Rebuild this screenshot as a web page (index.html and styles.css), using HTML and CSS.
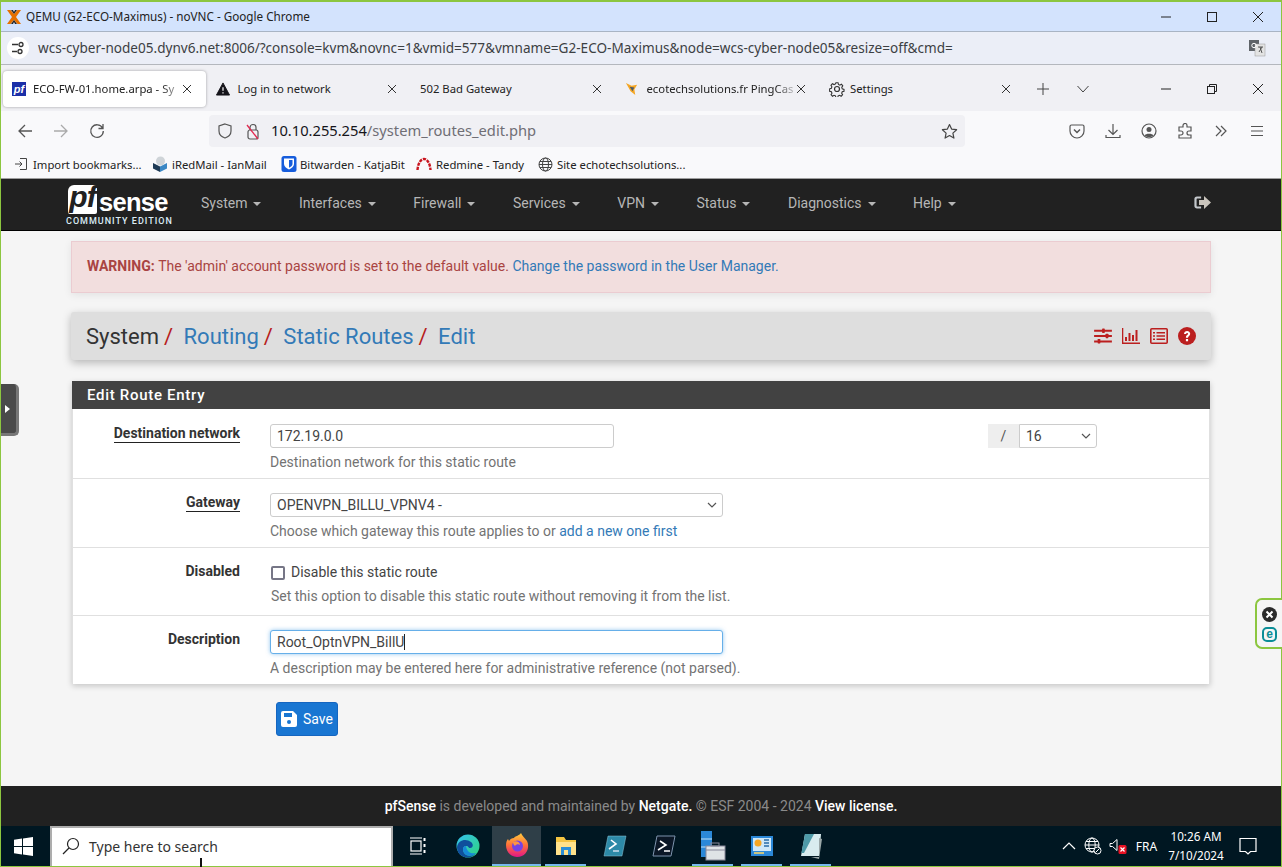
FILE: index.html
```html
<!DOCTYPE html>
<html lang="en">
<head>
    <meta charset="UTF-8">
    <title>ECO-FW-01.home.arpa - System: Routing: Static Routes: Edit</title>
    <link rel="stylesheet" href="styles.css">
</head>
<body>
<div class="screen">
    <div class="titlebar">
        <svg class="app-icon" width="16" height="16" viewBox="0 0 16 16"><path d="M1 1h3.500L8 5 11.500 1H15L10 8l5 7h-3.500L8 11l-3.500 4H1l5-7z" fill="#e57000"/><path d="M5 1h2l1 2 1-2h2L8 5zM5 15h2l1-2 1 2h2L8 11z" fill="#222"/></svg>
        <span class="title-text">QEMU (G2-ECO-Maximus) - noVNC - Google Chrome</span>
        <div class="winbtns">
            <span class="winbtn"><svg width="12" height="12" viewBox="0 0 12 12"><path d="M1 6h10" stroke="#222" stroke-width="1"/></svg></span>
            <span class="winbtn"><svg width="12" height="12" viewBox="0 0 12 12"><rect x="1.500" y="1.500" width="9" height="9" fill="none" stroke="#222"/></svg></span>
            <span class="winbtn"><svg width="12" height="12" viewBox="0 0 12 12"><path d="M1 1l10 10M11 1L1 11" stroke="#222"/></svg></span>
        </div>
    </div>

    <div class="addressbar">
        <span class="site-btn"><svg width="14" height="14" viewBox="0 0 14 14" fill="none" stroke="#333" stroke-width="1.300"><path d="M1 3.500h6M1 10.500h5"/><circle cx="10" cy="3.500" r="2"/><circle cx="9" cy="10.500" r="2"/></svg></span>
        <span class="address-text">wcs-cyber-node05.dynv6.net:8006/?console=kvm&amp;novnc=1&amp;vmid=577&amp;vmname=G2-ECO-Maximus&amp;node=wcs-cyber-node05&amp;resize=off&amp;cmd=</span>
        <svg class="translate" width="18" height="18" viewBox="0 0 18 18"><rect x="1" y="1" width="10" height="11" fill="#5f6368"/><rect x="7" y="5" width="10" height="12" fill="#e3e3e3" stroke="#999" stroke-width=".5"/><circle cx="6" cy="6.500" r="2.200" fill="none" stroke="#fff"/><path d="M10 8h5M12 8l2 6M14 8l-3 5" stroke="#555" fill="none"/></svg>
    </div>

    <div class="ff-tabs">
        <div class="tab tab-active">
            <span class="pf-favicon">pf</span>
            <span class="tab-label tab-fade">ECO-FW-01.home.arpa - Sy</span>
            <svg class="tab-close" width="10" height="10" viewBox="0 0 10 10"><path d="M1 1l8 8M9 1L1 9" stroke="#333"/></svg>
        </div>
        <div class="tab">
            <svg class="tab-icon" width="14" height="14" viewBox="0 0 15 15"><path d="M7.500 1L14.500 14H.500z" fill="#15141a" stroke="#15141a" stroke-linejoin="round"/><path d="M7.500 5.500v4M7.500 11v1.200" stroke="#fff" stroke-width="1.300"/></svg>
            <span class="tab-label">Log in to network</span>
            <svg class="tab-close" width="10" height="10" viewBox="0 0 10 10"><path d="M1 1l8 8M9 1L1 9" stroke="#333"/></svg>
        </div>
        <div class="tab">
            <span class="tab-label">502 Bad Gateway</span>
            <svg class="tab-close" width="10" height="10" viewBox="0 0 10 10"><path d="M1 1l8 8M9 1L1 9" stroke="#333"/></svg>
        </div>
        <div class="tab">
            <svg class="tab-icon" width="14" height="14" viewBox="0 0 15 15"><path d="M1 1l6 3 6-1-3 5 1 6-5-4z" fill="#f5a623"/><path d="M5 5l5 1-2 4z" fill="#4a5a6a"/></svg>
            <span class="tab-label tab-fade">ecotechsolutions.fr PingCas</span>
            <svg class="tab-close" width="10" height="10" viewBox="0 0 10 10"><path d="M1 1l8 8M9 1L1 9" stroke="#333"/></svg>
        </div>
        <div class="tab">
            <svg class="tab-icon tab-icon-gear" width="16" height="16" viewBox="0 0 16 16" fill="none" stroke="#333" stroke-width="1.200"><circle cx="8" cy="8" r="2.500"/><path d="M6.800 1h2.400l.4 2 1.500.7 1.800-1 1.500 1.800-1.100 1.700.5 1.600 2 .6v2.200l-2 .5-.6 1.600 1 1.700-1.600 1.600-1.700-1-1.600.6-.5 2H6.800l-.5-2-1.600-.6-1.700 1-1.600-1.600 1-1.700-.6-1.600-2-.5V7.800l2-.6.5-1.600-1-1.700L2.900 2.100l1.800 1 1.600-.7z" transform="translate(.8 .8) scale(.9)"/></svg>
            <span class="tab-label">Settings</span>
            <svg class="tab-close" width="10" height="10" viewBox="0 0 10 10"><path d="M1 1l8 8M9 1L1 9" stroke="#333"/></svg>
        </div>
        <span class="tab-tool"><svg width="12" height="12" viewBox="0 0 12 12"><path d="M6 0v12M0 6h12" stroke="#444"/></svg></span>
        <span class="tab-tool tab-list"><svg width="12" height="8" viewBox="0 0 12 8"><path d="M.500 1L6 7l5.500-6" fill="none" stroke="#444"/></svg></span>
        <div class="winbtns">
            <span class="winbtn"><svg width="12" height="12" viewBox="0 0 12 12"><path d="M1 6h10" stroke="#222"/></svg></span>
            <span class="winbtn"><svg width="12" height="12" viewBox="0 0 12 12"><rect x="1.500" y="3.500" width="7" height="7" fill="none" stroke="#222"/><path d="M3.500 3.500v-2h7v7h-2" fill="none" stroke="#222"/></svg></span>
            <span class="winbtn"><svg width="12" height="12" viewBox="0 0 12 12"><path d="M1 1l10 10M11 1L1 11" stroke="#222"/></svg></span>
        </div>
    </div>

    <div class="ff-nav">
        <span class="nav-btn"><svg width="16" height="16" viewBox="0 0 16 16"><path d="M15 8H2M8 2L2 8l6 6" fill="none" stroke="#555" stroke-width="1.300"/></svg></span>
        <span class="nav-btn"><svg width="16" height="16" viewBox="0 0 16 16"><path d="M1 8h13M8 2l6 6-6 6" fill="none" stroke="#aaa" stroke-width="1.300"/></svg></span>
        <span class="nav-btn"><svg width="16" height="16" viewBox="0 0 16 16"><path d="M13.500 5A6.300 6.300 0 1 0 14.300 8M14 1v4.500H9.500" fill="none" stroke="#555" stroke-width="1.300"/></svg></span>
        <div class="urlbar">
            <svg class="url-shield" width="16" height="16" viewBox="0 0 16 16"><path d="M8 1l6 2v5c0 3.500-3 6-6 7-3-1-6-3.500-6-7V3z" fill="none" stroke="#555" stroke-width="1.200"/></svg>
            <svg class="url-lock" width="16" height="17" viewBox="0 0 16 17"><rect x="3" y="7" width="10" height="9" rx="2" fill="none" stroke="#555" stroke-width="1.200"/><path d="M5 7V4.500a3 3 0 0 1 6 0V7" fill="none" stroke="#555" stroke-width="1.200"/><path d="M2 2l11 14" stroke="#e22850" stroke-width="1.300"/></svg>
            <span class="url-text">10.10.255.254<span class="url-path">/system_routes_edit.php</span></span>
            <svg class="url-star" width="17" height="17" viewBox="0 0 17 17"><path d="M8.500 1.500l2.100 4.600 5 .6-3.700 3.400 1 5-4.400-2.500-4.400 2.500 1-5L1.400 6.700l5-.6z" fill="none" stroke="#444" stroke-width="1.200" stroke-linejoin="round"/></svg>
        </div>
        <div class="nav-right">
            <span class="nav-btn"><svg width="16" height="16" viewBox="0 0 16 16" fill="none" stroke="#555" stroke-width="1.200"><path d="M2.500 2h11A1.500 1.500 0 0 1 15 3.500V8a7 7 0 0 1-14 0V3.500A1.500 1.500 0 0 1 2.500 2z"/><path d="M5 6.500l3 3 3-3" stroke-width="1.500"/></svg></span>
            <span class="nav-btn"><svg width="16" height="16" viewBox="0 0 16 16" fill="none" stroke="#555" stroke-width="1.200"><path d="M8 1v10M3.500 7L8 11.500 12.500 7M1 12v2.500h14V12"/></svg></span>
            <span class="nav-btn"><svg width="16" height="16" viewBox="0 0 16 16"><circle cx="8" cy="8" r="7" fill="none" stroke="#555" stroke-width="1.200"/><circle cx="8" cy="6.500" r="2.500" fill="#555"/><path d="M3.500 12.500c1-2.500 8-2.500 9 0A7 7 0 0 1 3.500 12.500z" fill="#555"/></svg></span>
            <span class="nav-btn"><svg width="16" height="16" viewBox="0 0 16 16"><path d="M6 2.500a2 2 0 0 1 4 0V4h4v4h-2a2 2 0 0 0 0 4h2v3H2v-3h2a1.800 1.800 0 0 0 0-4H2V4h4z" fill="none" stroke="#555" stroke-width="1.200"/></svg></span>
            <span class="nav-btn"><svg width="14" height="14" viewBox="0 0 14 14"><path d="M2 2l5 5-5 5M7 2l5 5-5 5" fill="none" stroke="#555" stroke-width="1.200"/></svg></span>
            <span class="nav-btn"><svg width="14" height="12" viewBox="0 0 14 12"><path d="M1 1.500h12M1 6h12M1 10.500h12" stroke="#555" stroke-width="1.200"/></svg></span>
        </div>
    </div>

    <div class="bookmarks">
        <div class="bm bm-import">
            <svg width="14" height="14" viewBox="0 0 14 14" fill="none" stroke="#444"><path d="M6 1.500h6.500v11H6M1 7h7M5.500 4.500L8 7l-2.500 2.500"/></svg>
            <span>Import bookmarks...</span>
        </div>
        <div class="bm bm-iredmail">
            <svg width="16" height="16" viewBox="0 0 16 16"><path d="M1 7l7 3.500V16L1 12.500z" fill="#1d3a55"/><path d="M15 7l-7 3.500V16l7-3.500z" fill="#3b87c4"/><circle cx="8.500" cy="5" r="4.500" fill="#cfd4d8"/></svg>
            <span>iRedMail - IanMail</span>
        </div>
        <div class="bm bm-bitwarden">
            <svg width="16" height="16" viewBox="0 0 16 16"><rect x="0.500" y="0" width="15" height="16" rx="2.500" fill="#175ddc"/><path d="M3 2.500h10V8c0 2.500-2.500 4.500-5 5.500C5.500 12.500 3 10.500 3 8z" fill="#fff"/><path d="M8 4h3.500v4c0 1.800-1.800 3-3.500 3.800z" fill="#175ddc"/></svg>
            <span>Bitwarden - KatjaBit</span>
        </div>
        <div class="bm bm-redmine">
            <svg width="16" height="14" viewBox="0 0 16 14" fill="none" stroke="#c9141e" stroke-width="2.400" stroke-dasharray="3.200 1"><path d="M1.500 13C2 6 5 2 8 2s6 4 6.500 11"/></svg>
            <span>Redmine - Tandy</span>
        </div>
        <div class="bm bm-site">
            <svg width="15" height="15" viewBox="0 0 15 15" fill="none" stroke="#444"><circle cx="7.500" cy="7.500" r="6.500"/><ellipse cx="7.500" cy="7.500" rx="3" ry="6.500"/><path d="M1 7.500h13M2 4.500h11M2 10.500h11"/></svg>
            <span>Site echotechsolutions...</span>
        </div>
    </div>

    <nav class="pf-nav">
        <div class="pf-logo">
            <div class="pf-mark"><span class="pf-box">pf</span><span class="pf-sense">sense</span></div>
            <div class="pf-edition">COMMUNITY EDITION</div>
        </div>
        <ul class="pf-menu">
            <li>System<b class="caret"></b></li>
            <li>Interfaces<b class="caret"></b></li>
            <li>Firewall<b class="caret"></b></li>
            <li>Services<b class="caret"></b></li>
            <li>VPN<b class="caret"></b></li>
            <li>Status<b class="caret"></b></li>
            <li>Diagnostics<b class="caret"></b></li>
            <li>Help<b class="caret"></b></li>
        </ul>
        <svg class="pf-logout" width="18" height="15" viewBox="0 0 18 15"><path d="M7 3.500v-1h-3a1.500 1.500 0 0 0-1.500 1.500v7a1.500 1.500 0 0 0 1.500 1.500h3v-1" fill="none" stroke="#c4c8cc" stroke-width="2.200"/><path d="M6 5h5V1l7 6.500L11 14v-4H6z" fill="#c9c4bc"/></svg>
    </nav>

    <main class="pf-main">
        <div class="alert">
            <b>WARNING:</b> The 'admin' account password is set to the default value. <a href="#">Change the password in the User Manager.</a>
        </div>

        <div class="crumbs">
            <h1 class="crumb-text">
                <span>System</span><i>/</i>
                <a href="#">Routing</a><i>/</i>
                <a href="#">Static Routes</a><i>/</i>
                <a href="#">Edit</a>
            </h1>
            <div class="crumb-icons">
                <svg width="18" height="16" viewBox="0 0 20 18" fill="#bb1f1f"><path d="M0 2h20v2.200H0zM0 8h20v2.200H0zM0 14h20v2.200H0z"/><rect x="9" y="0.500" width="3" height="5" rx=".5"/><rect x="13" y="6.500" width="3" height="5" rx=".5"/><rect x="4" y="12.500" width="3" height="5" rx=".5"/></svg>
                <svg width="18" height="16" viewBox="0 0 18 16" fill="#bb1f1f"><path d="M0 0h1.300v14.500H18V16H0z"/><path d="M3 9h2v4H3zM6.500 5h2v8h-2zM10 7h2v6h-2zM13.500 2h2v11h-2z"/></svg>
                <svg width="18" height="16" viewBox="0 0 18 16"><rect x=".8" y=".8" width="16.400" height="14.400" rx="1" fill="none" stroke="#bb1f1f" stroke-width="1.600"/><path d="M3 4h2v1.600H3zM6.500 4h8.500v1.600H6.500zM3 7.200h2v1.600H3zM6.500 7.200h8.500v1.600H6.500zM3 10.400h2V12H3zM6.500 10.400h8.500V12H6.500z" fill="#bb1f1f"/></svg>
                <svg width="18" height="18" viewBox="0 0 18 18"><circle cx="9" cy="9" r="9" fill="#bb1f1f"/><path d="M6 7c0-4.200 6.200-4 6.200-.2 0 2.300-2.200 2.300-2.200 4H7.900c0-2.800 2.200-2.800 2.200-4 0-1.100-1.900-1.100-2 .2zM7.900 12h2.200v2.200H7.900z" fill="#fff"/></svg>
            </div>
        </div>

        <section class="panel">
            <h2 class="panel-heading">Edit Route Entry</h2>
            <div class="form-row form-row-first">
                <label class="form-label"><span class="element-required">Destination network</span></label>
                <div class="form-field">
                    <div class="form-control field-ip">172.19.0.0</div>
                    <div class="form-help">Destination network for this static route</div>
                </div>
                <div class="mask-group">
                    <span class="mask-slash">/</span>
                    <div class="form-control select-box mask-select">16
                        <svg width="10" height="6" viewBox="0 0 10 6"><path d="M1 1l4 4 4-4" fill="none" stroke="#555" stroke-width="1.200"/></svg>
                    </div>
                </div>
            </div>
            <div class="form-row">
                <label class="form-label"><span class="element-required">Gateway</span></label>
                <div class="form-field">
                    <div class="form-control select-box field-wide">OPENVPN_BILLU_VPNV4 -
                        <svg width="10" height="6" viewBox="0 0 10 6"><path d="M1 1l4 4 4-4" fill="none" stroke="#555" stroke-width="1.200"/></svg>
                    </div>
                    <div class="form-help">Choose which gateway this route applies to or <a href="#">add a new one first</a></div>
                </div>
            </div>
            <div class="form-row form-row-short">
                <label class="form-label">Disabled</label>
                <div class="form-field">
                    <div class="check-line"><span class="check"></span>Disable this static route</div>
                    <div class="form-help check-help">Set this option to disable this static route without removing it from the list.</div>
                </div>
            </div>
            <div class="form-row form-row-last">
                <label class="form-label">Description</label>
                <div class="form-field">
                    <div class="form-control field-wide field-focus">Root_OptnVPN_BillU<span class="text-caret"></span></div>
                    <div class="form-help">A description may be entered here for administrative reference (not parsed).</div>
                </div>
            </div>
        </section>

        <button class="btn-save">
            <svg width="16" height="16" viewBox="0 0 16 16"><path d="M2 0h10l4 4v10a2 2 0 0 1-2 2H2a2 2 0 0 1-2-2V2a2 2 0 0 1 2-2z" fill="#fff"/><rect x="3" y="2" width="8" height="4" fill="#1976d2"/><circle cx="8" cy="11" r="2" fill="#1976d2"/></svg>
            Save
        </button>
    </main>

    <footer class="pf-footer">
        <b>pfSense</b>&nbsp;is developed and maintained by&nbsp;<b>Netgate.</b>&nbsp;© ESF 2004 - 2024&nbsp;<b>View license.</b>
    </footer>

    <div class="taskbar">
        <span class="start"><svg width="19" height="19" viewBox="0 0 19 19" fill="#fff"><path d="M0 2.700L8 1.500v7.500H0zM9 1.400L19 0v9H9zM0 10h8v7.500L0 16.300zM9 10h10v9L9 17.600z"/></svg></span>
        <div class="search">
            <svg width="18" height="18" viewBox="0 0 18 18" fill="none" stroke="#222" stroke-width="1.200"><circle cx="11" cy="7" r="5.500"/><path d="M7 11l-6 6"/></svg>
            <span>Type here to search</span>
        </div>
        <span class="task task-view"><svg width="16" height="18" viewBox="0 0 16 18" fill="none" stroke="#fff" stroke-width="1.200"><rect x="1" y="4" width="10" height="10"/><path d="M0 1h12M0 17h12" /><path d="M14.500 1v3M14.500 7v3M14.500 13v3" stroke-width="2"/></svg></span>
        <span class="task"><svg width="24" height="24" viewBox="0 0 24 24"><defs><linearGradient id="edgeA" x1="0" y1="0" x2="1" y2="1"><stop offset="0" stop-color="#35c1f1"/><stop offset="1" stop-color="#2ed47a"/></linearGradient></defs><circle cx="12" cy="12" r="11.500" fill="url(#edgeA)"/><path d="M1 13C2 6 10 4 15 8c3 2.500 2 6-1 6-2 0-1-2-4-2-3.500 0-4 5-1 8 2 2 7 3 11-1-3 4.500-9 5.500-13 3.500C3 21 1 17 1 13z" fill="#0f4f9c"/><path d="M10 12c-3.500 0-4 5-1 8 2 2 7 3 11-1-4 1-9 0-10-7z" fill="#1688d8"/></svg></span>
        <span class="task task-active"><svg width="24" height="24" viewBox="0 0 24 24"><defs><linearGradient id="foxA" x1="0" y1="0" x2="0" y2="1"><stop offset="0" stop-color="#ffcb3d"/><stop offset=".5" stop-color="#ff7139"/><stop offset="1" stop-color="#e31587"/></linearGradient></defs><path d="M16 0c1 3 4 5 6 8 3 6 0 16-10 16C5 24 1 18 1 12c0-3 1-5 2-6l1 2c1-2 3-3 5-3 1-2 5-2 7-5z" fill="url(#foxA)"/><circle cx="12.500" cy="13" r="5.500" fill="#7542e5"/><path d="M8 9c3-2 7 0 7 3-1-1-4-1-5 1-1-1-2-2-2-4z" fill="#ff9640"/></svg></span>
        <span class="task task-open"><svg width="22" height="20" viewBox="0 0 22 20"><path d="M1 1h8l2 3h10v15H1z" fill="#f4c542"/><path d="M1 6h20v13H1z" fill="#ffe28a"/><rect x="6" y="11" width="10" height="8" fill="#2a8fd6"/><rect x="9" y="14" width="4" height="5" fill="#ffe28a"/></svg></span>
        <span class="task"><svg width="24" height="24" viewBox="0 0 24 24"><path d="M5 2h18l-4 20H1z" fill="#2d8aa8" stroke="#8fc7d8" stroke-width=".5"/><path d="M8 6l5 4-7 5" fill="none" stroke="#fff" stroke-width="1.600"/><path d="M10 17h6" stroke="#cde" stroke-width="1.500"/></svg></span>
        <span class="task"><svg width="24" height="22" viewBox="0 0 24 22"><path d="M5 1h18l-4 20H1z" fill="#0b1726" stroke="#7d93ad"/><path d="M8 6l6 4-8 5" fill="none" stroke="#fff" stroke-width="1.600"/><path d="M12 16h6" stroke="#fff" stroke-width="1.500"/></svg></span>
        <span class="task task-open"><svg width="26" height="30" viewBox="0 0 26 30"><rect x="1" y="0" width="11" height="26" fill="#2b88d8"/><path d="M1 8h11M1 16h11" stroke="#bfe0f7"/><rect x="6" y="15" width="19" height="14" fill="#dfe3e6" stroke="#889"/><path d="M6 19h19" stroke="#889"/><rect x="11" y="12" width="8" height="3" fill="none" stroke="#889"/></svg></span>
        <span class="task task-open"><svg width="22" height="20" viewBox="0 0 22 20"><rect x="0" y="0" width="22" height="20" fill="#2b88d8"/><rect x="2" y="2" width="18" height="13" fill="#cfe8f9"/><circle cx="7" cy="7" r="3.500" fill="#f6a623"/><path d="M13 4h5M13 7h5M13 10h5" stroke="#2b6ca8" stroke-width="1.500"/><path d="M3 17h10" stroke="#ffd966" stroke-width="1.500"/></svg></span>
        <span class="task task-open"><svg width="22" height="26" viewBox="0 0 22 26"><path d="M5 1h16l-2 22H1z" fill="#d9ecef"/><path d="M5 1h9L4 20H1.400z" fill="#4f9aa8"/><path d="M19 5l3 1-3 20-8-2h8z" fill="#9aa7a8"/></svg></span>
        <div class="tray">
            <span class="tray-item tray-chevron"><svg width="14" height="8" viewBox="0 0 14 8"><path d="M1 7l6-6 6 6" fill="none" stroke="#fff" stroke-width="1.200"/></svg></span>
            <span class="tray-item tray-globe"><svg width="18" height="18" viewBox="0 0 18 18" fill="none" stroke="#fff"><circle cx="8" cy="8" r="7"/><ellipse cx="8" cy="8" rx="3.200" ry="7"/><path d="M1 8h14M2 4.500h12M2 11.500h12"/><circle cx="13.500" cy="13.500" r="3.500" fill="#001822"/><path d="M11.500 15.500l4-4"/></svg></span>
            <span class="tray-item tray-sound"><svg width="18" height="18" viewBox="0 0 18 18"><path d="M1 6.500h2.500L8 2.500v11l-4.500-4H1z" fill="none" stroke="#fff"/><rect x="9.500" y="8" width="8" height="9" rx="1.500" fill="#e81123"/><path d="M11.500 10.500l4 4M15.500 10.500l-4 4" stroke="#fff" stroke-width="1.200"/></svg></span>
            <span class="tray-item tray-lang">FRA</span>
            <div class="clock"><div>10:26 AM</div><div>7/10/2024</div></div>
            <span class="tray-item tray-notify"><svg width="18" height="18" viewBox="0 0 18 18"><path d="M1 1.500h16v13h-5.500L9 17l-2.500-2.500H1z" fill="none" stroke="#fff" stroke-width="1.200"/></svg></span>
        </div>
    </div>

    <div class="novnc-handle"><span class="novnc-arrow"></span></div>
    <div class="eset-widget">
        <svg width="15" height="15" viewBox="0 0 15 15"><circle cx="7.500" cy="7.500" r="7.500" fill="#2b2b2b"/><path d="M4.500 4.500l6 6M10.500 4.500l-6 6" stroke="#fff" stroke-width="2"/></svg>
        <span class="eset-e">e</span>
    </div>
    <div class="mouse-beam"></div>
</div>
</body>
</html>
```

FILE: styles.css
```css
* {
    box-sizing: border-box;
}
html, body {
    margin: 0;
    padding: 0;
    height: 867px;
    overflow: hidden;
}
body {
    font-family: "Noto Sans", "Open Sans", sans-serif;
    color: #222;
    background-color: #8cc63f;
}
a {
    text-decoration: none;
    color: #337ab7;
}
.screen {
    position: relative;
    width: 1282px;
    height: 867px;
    padding: 2px 1px 1px 1px;
    background-color: #8cc63f;
    display: flex;
    flex-direction: column;
    overflow: hidden;
}

/* chrome popup window */
.titlebar {
    height: 30px;
    flex: none;
    display: flex;
    align-items: center;
    background-color: #d3e3fd;
    border-bottom: 1px solid #a9b4c4;
    padding-left: 5px;
}
.title-text {
    margin-left: 4px;
    margin-bottom: 2px;
    font-size: 11.700px;
}
.winbtns {
    margin-left: auto;
    display: flex;
}
.winbtn {
    width: 46px;
    display: flex;
    justify-content: center;
    align-items: center;
}
.addressbar {
    height: 33px;
    flex: none;
    display: flex;
    align-items: center;
    background-color: #ebeef7;
    border-bottom: 1px solid #b4b7bd;
    padding-left: 6px;
}
.site-btn {
    width: 22px;
    height: 22px;
    border-radius: 50%;
    background-color: #fff;
    display: flex;
    align-items: center;
    justify-content: center;
}
.address-text {
    margin-left: 9px;
    margin-bottom: 2px;
    font-size: 13.570px;
    color: #3c4043;
}
.translate {
    margin-left: auto;
    margin-right: 15px;
}

/* firefox */
.ff-tabs {
    height: 46px;
    flex: none;
    display: flex;
    align-items: center;
    background-color: #f0f0f4;
    padding: 1px 0 0 2px;
}
.tab {
    width: 204.500px;
    height: 36px;
    flex: none;
    display: flex;
    align-items: center;
    padding: 0 15px 0 8px;
    font-size: 11.300px;
    border-radius: 4px;
}
.tab-active {
    width: 203px;
    margin-right: 1.500px;
    padding: 0 14px 0 9px;
    background-color: #fff;
    box-shadow: 0 0 3px rgba(0, 0, 0, 0.35);
}
.tab-icon, .pf-favicon {
    flex: none;
    margin-right: 8px;
}
.pf-favicon {
    width: 14px;
    margin-right: 7px;
    height: 14px;
    background-color: #1b2fa8;
    color: #fff;
    font-family: "Liberation Sans", sans-serif;
    font-size: 11px;
    font-weight: bold;
    font-style: italic;
    line-height: 14px;
    text-align: center;
}
.tab-icon-gear {
    margin-right: 5px;
}
.tab-label {
    flex: 1;
    min-width: 0;
    margin-bottom: 1px;
    white-space: nowrap;
}
.tab-fade {
    -webkit-mask-image: linear-gradient(to right, #000 86%, rgba(0, 0, 0, 0.15) 100%);
    mask-image: linear-gradient(to right, #000 86%, rgba(0, 0, 0, 0.15) 100%);
}
.tab-close {
    flex: none;
}
.tab-tool {
    width: 30px;
    flex: none;
    display: flex;
    justify-content: center;
    margin-left: 2.500px;
}
.tab-list {
    margin-left: 10px;
}
.ff-nav {
    height: 40px;
    flex: none;
    display: flex;
    align-items: center;
    background-color: #f9f9fb;
    padding-left: 6px;
}
.nav-btn {
    width: 36px;
    height: 32px;
    flex: none;
    display: flex;
    justify-content: center;
    align-items: center;
}
.urlbar {
    width: 756px;
    height: 32px;
    margin-left: 94px;
    flex: none;
    display: flex;
    align-items: center;
    padding: 0 7px 0 8px;
    background-color: #f0f0f4;
    border-radius: 4px;
}
.url-lock {
    margin-left: 12px;
}
.url-text {
    margin-left: 10px;
    margin-bottom: 2px;
    font-size: 14.700px;
    color: #15141a;
}
.url-path {
    color: #6f6e75;
}
.url-star {
    margin-left: auto;
}
.nav-right {
    margin-left: 94px;
    display: flex;
}
.bookmarks {
    height: 28px;
    flex: none;
    display: flex;
    align-items: center;
    background-color: #f9f9fb;
    padding-left: 13px;
    font-size: 11.300px;
    border-bottom: 1px solid #9e9e9e;
    padding-bottom: 1px;
}
.bm {
    display: flex;
    align-items: center;
    gap: 4px;
    flex: none;
    white-space: nowrap;
}
.bm-import { width: 138px; gap: 5px; }
.bm-iredmail { width: 129px; }
.bm-bitwarden { width: 135px; gap: 3px; }
.bm-redmine { width: 122px; }

/* pfsense */
.pf-nav {
    height: 52px;
    flex: none;
    display: flex;
    align-items: center;
    background-color: #212121;
    border-bottom: 1px solid #000;
    font-family: Roboto, sans-serif;
    padding-left: 65px;
}
.pf-logo {
    width: 135px;
    flex: none;
    color: #fff;
    padding-top: 3px;
}
.pf-mark {
    display: flex;
    align-items: flex-end;
    height: 29px;
    margin-left: 2px;
}
.pf-box {
    width: 29px;
    height: 29px;
    background-color: #fff;
    color: #212121;
    border-radius: 6px 2px 2px 2px;
    font-family: "Liberation Sans", sans-serif;
    font-size: 30px;
    font-weight: bold;
    font-style: italic;
    line-height: 24px;
    text-align: center;
    letter-spacing: -1px;
}
.pf-sense {
    font-family: "Liberation Sans", sans-serif;
    font-size: 25.500px;
    font-weight: bold;
    line-height: 23px;
    margin-left: 2px;
    letter-spacing: -0.700px;
}
.pf-edition {
    margin-top: 1px;
    font-size: 9px;
    font-weight: 500;
    letter-spacing: 1px;
    line-height: 12px;
    white-space: nowrap;
    color: #dcecf5;
}
.pf-menu {
    list-style: none;
    margin: 0 0 4px 0;
    padding: 0;
    display: flex;
    gap: 37.500px;
    font-size: 14px;
    color: #b6b6b6;
}
.caret {
    display: inline-block;
    margin-left: 6px;
    vertical-align: middle;
    border-top: 4px solid #b6b6b6;
    border-left: 4px solid transparent;
    border-right: 4px solid transparent;
}
.pf-logout {
    margin-left: auto;
    margin-right: 70px;
    margin-bottom: 4px;
}
.pf-main {
    height: 555px;
    flex: none;
    background-color: #f5f5f5;
    font-family: Roboto, sans-serif;
    font-size: 14px;
    padding: 10px 70px 0 70px;
}
.alert {
    height: 52px;
    padding: 0 15px 2px 15px;
    display: flex;
    align-items: center;
    white-space: pre-wrap;
    background-color: #f2dede;
    border: 1px solid #ebccd1;
    color: #a94442;
    box-shadow: 0 2px 8px rgba(0, 0, 0, 0.08);
}
.crumbs {
    height: 48px;
    margin-top: 19px;
    padding: 0 15px;
    display: flex;
    align-items: center;
    background-color: #dedede;
    border-radius: 3px;
    box-shadow: 0 3px 8px rgba(0, 0, 0, 0.25);
}
.crumb-text {
    margin: 0;
    font-size: 22px;
    font-weight: 400;
    color: #333;
}
.crumb-text i {
    color: #b71c1c;
    font-style: normal;
    margin-left: 5px;
    margin-right: 5px;
}
.crumb-icons {
    margin-left: auto;
    display: flex;
    align-items: center;
    gap: 10px;
}
.panel {
    margin-top: 21px;
    margin-left: 1px;
    width: 1138px;
    background-color: #fff;
    box-shadow: 0 2px 6px rgba(0, 0, 0, 0.2);
}
.panel-heading {
    margin: 0;
    height: 28px;
    padding-left: 15px;
    background-color: #424242;
    color: #fff;
    font-size: 15px;
    font-weight: 500;
    letter-spacing: 0.700px;
    line-height: 28px;
}
.form-row {
    height: 69px;
    padding-top: 14px;
    display: flex;
    border-bottom: 1px solid #e0e0e0;
    border-left: 1px solid #e0e0e0;
    border-right: 1px solid #e0e0e0;
}
.form-row-first {
    height: 70px;
    padding-top: 15px;
}
.form-row-short {
    height: 68px;
}
.form-row-last {
    height: 68px;
    border-bottom: 0;
}
.form-label {
    width: 167px;
    flex: none;
    text-align: right;
    font-size: 14px;
    font-weight: 700;
    color: #333;
    line-height: 18px;
}
.element-required {
    display: inline-block;
    border-bottom: 1px solid #222;
}
.form-field {
    margin-left: 30px;
    flex: none;
    width: 718px;
}
.form-control {
    display: block;
    height: 24px;
    padding: 0 6px;
    font-family: Roboto, sans-serif;
    font-size: 14px;
    color: #444;
    background-color: #fff;
    border: 1px solid #ccc;
    border-radius: 3px;
    line-height: 22px;
    white-space: nowrap;
}
.select-box {
    display: flex;
    justify-content: space-between;
    align-items: center;
    padding-right: 5px;
}
.field-ip {
    width: 344px;
}
.field-wide {
    width: 453px;
}
.field-focus {
    border-color: #66afe9;
    box-shadow: 0 0 4px rgba(102, 175, 233, 0.7);
}
.text-caret {
    display: inline-block;
    width: 1px;
    height: 16px;
    vertical-align: -3px;
    background-color: #222;
}
.form-help {
    margin-top: 6px;
    font-size: 14px;
    color: #737373;
    line-height: 16px;
}
.check-line {
    display: flex;
    align-items: center;
    height: 20px;
    padding-left: 1px;
    color: #444;
    font-size: 14px;
}
.check {
    width: 14px;
    height: 14px;
    margin-right: 6px;
    margin-top: 2px;
    background-color: #fff;
    border: 2px solid #767686;
    border-radius: 2px;
}
.check-help {
    padding-left: 1px;
}
.mask-group {
    display: flex;
    height: 24px;
}
.mask-slash {
    width: 31px;
    display: flex;
    justify-content: center;
    align-items: center;
    background-color: #eee;
    color: #555;
    font-size: 14px;
}
.mask-select {
    width: 78px;
    border-radius: 0 3px 3px 0;
}
.btn-save {
    display: flex;
    align-items: center;
    gap: 6px;
    height: 34px;
    margin-top: 18px;
    margin-left: 205px;
    padding: 0 0 0 4px;
    width: 62px;
    background-color: #1976d2;
    border: 1px solid #1565c0;
    border-radius: 3px;
    color: #fff;
    font-family: Roboto, sans-serif;
    font-size: 14px;
    font-weight: 400;
}
.pf-footer {
    height: 40px;
    flex: none;
    display: flex;
    justify-content: center;
    align-items: center;
    background-color: #212121;
    color: #8a8a8a;
    font-family: Roboto, sans-serif;
    font-size: 14px;
}
.pf-footer b {
    color: #fff;
    font-weight: 500;
}

/* windows taskbar */
.taskbar {
    height: 40px;
    flex: none;
    display: flex;
    align-items: center;
    background-color: #001722;
}
.start {
    width: 49px;
    height: 40px;
    display: flex;
    align-items: center;
    padding-left: 13px;
    flex: none;
}
.search {
    width: 343px;
    height: 40px;
    flex: none;
    display: flex;
    align-items: center;
    gap: 9px;
    padding-left: 10px;
    padding-bottom: 2px;
    background-color: #fff;
    border: 2px solid #adadad;
    border-bottom: 0;
    font-size: 14px;
    color: #333;
}
.task {
    position: relative;
    width: 49px;
    height: 40px;
    flex: none;
    display: flex;
    align-items: center;
    justify-content: center;
}
.task-view {
    width: 50px;
}
.task-active {
    background-color: #2f3f48;
    border-bottom: 2px solid #76b9ed;
}
.task-open::after {
    content: "";
    position: absolute;
    left: 4px;
    right: 4px;
    bottom: 0;
    height: 2px;
    background-color: #76b9ed;
}
.tray {
    margin-left: auto;
    display: flex;
    align-items: center;
    color: #fff;
    padding-right: 22px;
}
.tray-item {
    display: flex;
    justify-content: center;
    align-items: center;
    flex: none;
}
.tray-chevron { width: 24px; }
.tray-globe { width: 24px; }
.tray-sound { width: 26px; }
.tray-lang {
    width: 31px;
    margin-right: 4px;
    font-size: 12px;
}
.clock {
    width: 60px;
    text-align: center;
    font-size: 11.700px;
    line-height: 19px;
    white-space: nowrap;
}
.tray-notify {
    width: 22px;
    margin-left: 11px;
}

/* floating bits over the page */
.novnc-handle {
    position: absolute;
    left: 1px;
    top: 384px;
    width: 18px;
    height: 52px;
    display: flex;
    align-items: center;
    padding-left: 4px;
    background-color: #4a4a4a;
    border-right: 3px solid #777;
    border-bottom: 3px solid #777;
    border-radius: 0 5px 5px 0;
}
.novnc-arrow {
    border-left: 5px solid #fff;
    border-top: 4px solid transparent;
    border-bottom: 4px solid transparent;
}
.eset-widget {
    position: absolute;
    left: 1255px;
    top: 598px;
    width: 27px;
    height: 51px;
    display: flex;
    flex-direction: column;
    align-items: center;
    gap: 5px;
    padding-top: 7px;
    background-color: #f5f5f5;
    border: 2px solid #8cc63f;
    border-right: 0;
    border-radius: 7px 0 0 7px;
}
.eset-e {
    width: 15px;
    height: 15px;
    border: 2px solid #0a8d96;
    border-radius: 5px;
    color: #0a8d96;
    font-family: "Liberation Sans", sans-serif;
    font-size: 12px;
    font-weight: bold;
    line-height: 10px;
    text-align: center;
}
.mouse-beam {
    position: absolute;
    left: 200px;
    top: 858px;
    width: 2px;
    height: 9px;
    background-color: #111;
}
```
